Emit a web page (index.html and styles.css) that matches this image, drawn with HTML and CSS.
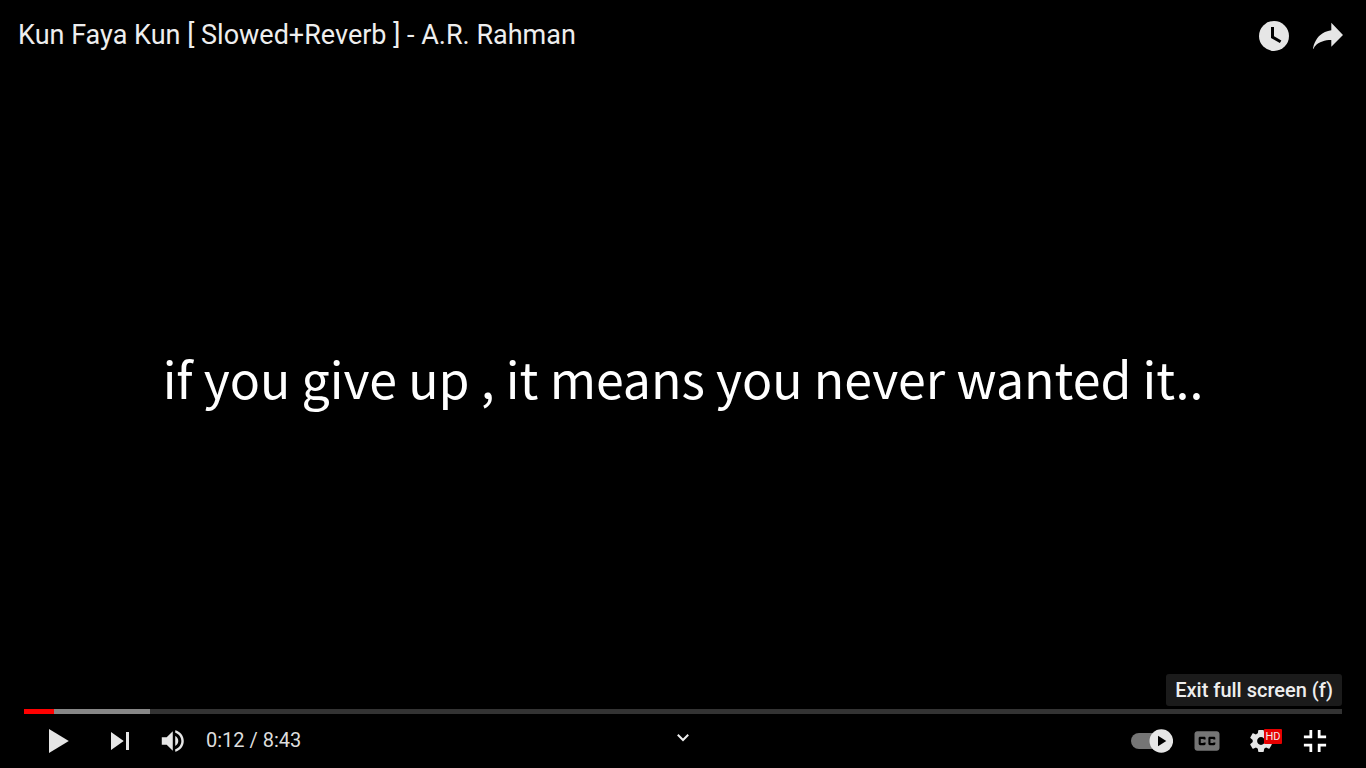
FILE: index.html
```html
<!DOCTYPE html>
<html lang="en">
<head>
<meta charset="utf-8">
<title>Kun Faya Kun [ Slowed+Reverb ] - A.R. Rahman</title>
<link rel="stylesheet" href="styles.css">
</head>
<body>
<div class="player">
  <header class="top-bar">
    <a class="title" href="#">Kun Faya Kun [ Slowed+Reverb ] - A.R. Rahman</a>
    <div class="top-actions">
      <button class="cell" type="button" aria-label="Watch later">
        <svg class="icon icon-full" viewBox="0 0 36 36"><circle cx="18" cy="18" r="10"/><path class="hands" d="M17,12 V18.7 L22.4,21.8"/></svg>
      </button>
      <button class="cell" type="button" aria-label="Share">
        <svg class="icon icon-full" viewBox="0 0 36 36"><path d="m 20.20,14.19 0,-4.95 7.79,8.1 -7.79,7.9 0,-4.5 C 16.27,20.69 12.10,21.81 9.34,24.76 8.80,25.13 7.90,28.2 8.12,25.65 9.08,21.32 11.80,17.18 15.98,15.38 c 1.33,-0.60 2.76,-0.98 4.21,-1.19 z"/></svg>
      </button>
    </div>
  </header>

  <main class="stage">
    <p class="lyric">if you give up , it means you never wanted it..</p>
  </main>

  <footer class="bottom">
    <div class="tooltip" role="tooltip" id="fs-tip">Exit full screen (f)</div>
    <input class="seek" type="range" min="0" max="523" value="12" aria-label="Seek" style="--played: 2.3%; --loaded: 9.55%">
    <div class="controls">
      <div class="group left">
        <button class="cell" type="button" aria-label="Play">
          <svg class="icon icon-full" viewBox="0 0 36 36"><path d="M12,26 L25.2,18 L12,10 z"/></svg>
        </button>
        <button class="cell" type="button" aria-label="Next">
          <svg class="icon icon-full" viewBox="0 0 36 36"><path d="M12,24 L20.5,18 L12,12 V24 z M22,12 v12 h2 V12 h-2 z"/></svg>
        </button>
        <button class="cell volume" type="button" aria-label="Mute">
          <svg class="icon icon-volume" viewBox="0 0 36 36"><path d="M8,21 L12,21 L17,26 L17,10 L12,15 L8,15 z M19,14 L19,22 C20.48,21.32 21.5,19.77 21.5,18 C21.5,16.26 20.48,14.74 19,14 z M19,11.29 C21.89,12.15 24,14.83 24,18 C24,21.17 21.89,23.85 19,24.71 L19,26.77 C23.01,25.86 26,22.28 26,18 C26,13.72 23.01,10.14 19,9.23 z"/></svg>
        </button>
        <div class="time">0:12 / 8:43</div>
      </div>
      <button class="more" type="button" aria-label="Scroll for details">
        <svg class="chevron" viewBox="0 0 14 10"><path d="M1.8,1.8 L7,7 L12.2,1.8"/></svg>
      </button>
      <div class="group right">
        <label class="cell autoplay">
          <input class="autoplay-box" type="checkbox" checked aria-label="Autoplay">
          <svg class="toggle" viewBox="0 0 42 24"><rect class="dim" x="0" y="4" width="36" height="16" rx="8"/><circle cx="30.3" cy="12" r="11.8"/><path class="cut" d="M27,6.8 V17.2 L35.3,12 z"/></svg>
        </label>
        <button class="cell" type="button" aria-label="Subtitles">
          <svg class="icon" viewBox="0 0 36 36"><path class="dim" fill-rule="evenodd" d="M11,11 C9.9,11 9,11.9 9,13 L9,23 C9,24.1 9.9,25 11,25 L25,25 C26.1,25 27,24.1 27,23 L27,13 C27,11.9 26.1,11 25,11 z M17,17 L15.5,17 L15.5,16.5 L13.5,16.5 L13.5,19.5 L15.5,19.5 L15.5,19 L17,19 L17,20 C17,20.55 16.55,21 16,21 L13,21 C12.45,21 12,20.55 12,20 L12,16 C12,15.45 12.45,15 13,15 L16,15 C16.55,15 17,15.45 17,16 z M24,17 L22.5,17 L22.5,16.5 L20.5,16.5 L20.5,19.5 L22.5,19.5 L22.5,19 L24,19 L24,20 C24,20.55 23.55,21 23,21 L20,21 C19.45,21 19,20.55 19,20 L19,16 C19,15.45 19.45,15 20,15 L23,15 C23.55,15 24,15.45 24,16 z"/></svg>
        </button>
        <button class="cell settings" type="button" aria-label="Settings">
          <svg class="icon" viewBox="0 0 36 36"><path fill-rule="evenodd" d="m 23.94,18.78 c .03,-0.25 .05,-0.51 .05,-0.78 0,-0.27 -0.02,-0.52 -0.05,-0.78 l 1.68,-1.32 c .15,-0.12 .19,-0.33 .09,-0.51 l -1.6,-2.76 c -0.09,-0.17 -0.31,-0.24 -0.48,-0.17 l -1.99,.8 c -0.41,-0.32 -0.86,-0.58 -1.35,-0.78 l -0.30,-2.12 c -0.02,-0.19 -0.19,-0.33 -0.39,-0.33 l -3.2,0 c -0.2,0 -0.36,.14 -0.39,.33 l -0.30,2.12 c -0.48,.2 -0.93,.47 -1.35,.78 l -1.99,-0.8 c -0.18,-0.07 -0.39,0 -0.48,.17 l -1.6,2.76 c -0.10,.17 -0.05,.39 .09,.51 l 1.68,1.32 c -0.03,.25 -0.05,.52 -0.05,.78 0,.26 .02,.52 .05,.78 l -1.68,1.32 c -0.15,.12 -0.19,.33 -0.09,.51 l 1.6,2.76 c .09,.17 .31,.24 .48,.17 l 1.99,-0.8 c .41,.32 .86,.58 1.35,.78 l .30,2.12 c .02,.19 .19,.33 .39,.33 l 3.2,0 c .2,0 .36,-0.14 .39,-0.33 l .30,-2.12 c .48,-0.2 .93,-0.47 1.35,-0.78 l 1.99,.8 c .18,.07 .39,0 .48,-0.17 l 1.6,-2.76 c .09,-0.17 .05,-0.39 -0.09,-0.51 l -1.68,-1.32 z m -5.94,2.01 c -1.54,0 -2.8,-1.25 -2.8,-2.8 0,-1.54 1.25,-2.8 2.8,-2.8 1.54,0 2.8,1.25 2.8,2.8 0,1.54 -1.25,2.8 -2.8,2.8 z"/></svg>
          <span class="badge">HD</span>
        </button>
        <button class="cell" type="button" aria-label="Exit full screen" aria-describedby="fs-tip">
          <svg class="icon bright" viewBox="0 0 36 36"><path d="M14,14 h-4 v2 h6 v-6 h-2 z M22,14 v-4 h-2 v6 h6 v-2 z M20,26 h2 v-4 h4 v-2 h-6 z M10,22 h4 v4 h2 v-6 h-6 z"/></svg>
        </button>
      </div>
    </div>
  </footer>
</div>
</body>
</html>
```
FILE: styles.css
```css
* {
  box-sizing: border-box;
}

body {
  margin: 0;
  background: #000;
  color: #eee;
  font-family: Roboto, "Liberation Sans", sans-serif;
}

button {
  padding: 0;
  border: 0;
  background: none;
  color: inherit;
  font: inherit;
  cursor: pointer;
}

.player {
  display: flex;
  flex-direction: column;
  min-height: 100vh;
}

.top-bar {
  display: flex;
  align-items: center;
  justify-content: space-between;
  height: 72px;
  padding: 0 11px 0 18px;
}

.title {
  padding-bottom: 2px;
  color: #eee;
  font-size: 27px;
  line-height: 32px;
  text-decoration: none;
}

.top-actions,
.group {
  display: flex;
  align-items: center;
}

.cell {
  position: relative;
  display: flex;
  flex: none;
  align-items: center;
  justify-content: center;
  width: 54px;
  height: 54px;
}

.icon {
  display: block;
  width: 50px;
  height: 50px;
  fill: #e6e6e6;
}

.icon-full {
  width: 54px;
  height: 54px;
}

.icon-volume {
  width: 44px;
  height: 44px;
}

.bright {
  fill: #fff;
}

.hands {
  fill: none;
  stroke: #000;
  stroke-width: 2;
}

.dim {
  fill: #757575;
}

.cut {
  fill: #000;
}

.stage {
  display: flex;
  flex: 1;
  align-items: center;
  justify-content: center;
  padding-bottom: 28px;
}

.lyric {
  margin: 0;
  color: #fff;
  font-family: "Noto Sans CJK JP", "Open Sans", sans-serif;
  font-size: 50px;
  line-height: 72px;
  text-align: center;
}

.bottom {
  position: relative;
  padding: 0 24px;
}

.tooltip {
  position: absolute;
  right: 24px;
  bottom: 62px;
  padding: 0 9px;
  border-radius: 3px;
  background: #1b1b1b;
  font-size: 20px;
  font-weight: 500;
  line-height: 32px;
}

.seek {
  display: block;
  width: 100%;
  height: 5px;
  margin: 0;
  appearance: none;
  background: linear-gradient(to right, #f00 var(--played), #868686 var(--played) var(--loaded), #333 var(--loaded));
  cursor: pointer;
}

.seek::-webkit-slider-thumb {
  width: 0;
  height: 5px;
  appearance: none;
}

.controls {
  display: grid;
  grid-template-columns: 1fr auto 1fr;
  align-items: center;
}

.left {
  gap: 8px;
  padding-left: 7px;
}

.right {
  justify-content: flex-end;
}

.volume {
  width: 38px;
}

.volume .icon {
  flex: none;
}

.time {
  padding: 0 0 2px 5px;
  color: #ddd;
  font-size: 20px;
  line-height: 24px;
}

.more {
  display: flex;
  align-items: center;
  justify-content: center;
  width: 36px;
  height: 54px;
  padding-bottom: 6px;
}

.chevron {
  width: 14px;
  height: 10px;
  fill: none;
  stroke: #eee;
  stroke-width: 2;
}

.autoplay {
  padding-right: 2px;
  cursor: pointer;
}

.autoplay-box {
  position: absolute;
  inset: 0;
  margin: 0;
  opacity: 0;
}

.toggle {
  width: 42px;
  height: 24px;
  fill: #e6e6e6;
}

.badge {
  position: absolute;
  top: 15px;
  right: 6px;
  width: 18px;
  border-radius: 1px;
  background: #e60000;
  color: #eee;
  font-size: 11px;
  line-height: 15px;
  text-align: center;
}
```
